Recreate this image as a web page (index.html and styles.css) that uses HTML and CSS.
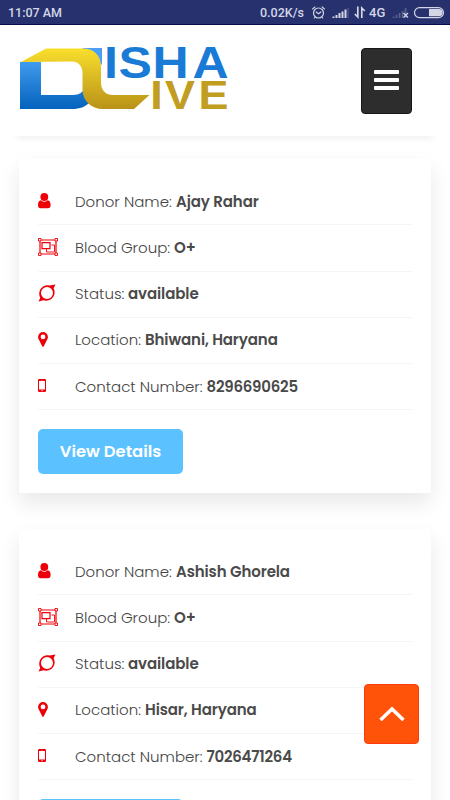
FILE: index.html
```html
<!DOCTYPE html>
<html lang="en">
<head>
<meta charset="utf-8">
<title>Disha Live</title>
<link rel="stylesheet" href="styles.css">
</head>
<body>
<svg class="sprite" aria-hidden="true">
  <symbol id="user" viewBox="0 0 13 16"><circle cx="6.3" cy="4" r="3.9"/><path d="M3 7.2C.8 7.4 0 9.5 0 12c0 2.200 1 3.200 2.700 3.200h7.200c1.700 0 2.700-1 2.700-3.200 0-2.500-.8-4.600-3-4.800a4.800 4.800 0 0 1-6.600 0z"/></symbol>
  <symbol id="group" viewBox="0 0 20 18"><g fill="none" stroke="currentColor"><path d="M2 2h16v14H2z" stroke-width="1.200"/><path d="M8.500 11v3h8V7h-3" stroke-width=".9"/><path d="M4 4.700h8v6H4z" stroke-width="1.200"/><path fill="#fff" d="M.5.5H3V3H.5zM17 .5h2.500V3H17zM.5 15H3v2.500H.5zM17 15h2.500v2.500H17z" stroke-width=".9"/></g></symbol>
  <symbol id="status" viewBox="0 0 18 18"><path fill-rule="evenodd" d="M17.500.5 15.600 4.300C18 9 16 13.500 12.500 15.600c-2.500 1.400-5 1.300-7 .6L.5 17.500l1.700-3.600C0 9 2 4.500 5.500 2.300c2-1.200 4-1.300 6-.8zM9 3a6 6 0 1 0 0 12A6 6 0 0 0 9 3z"/></symbol>
  <symbol id="pin" viewBox="0 0 10 15"><path fill-rule="evenodd" d="M5 0a4.900 4.900 0 0 0-4.900 4.900c0 1.200.3 1.900.7 2.700l3.400 6.700q.8 1 1.600 0l3.400-6.700c.4-.8.7-1.500.7-2.700A4.900 4.900 0 0 0 5 0zm0 2.500a2.400 2.400 0 1 1 0 4.800 2.400 2.400 0 0 1 0-4.800z"/></symbol>
  <symbol id="phone" viewBox="0 0 8 13"><path fill-rule="evenodd" d="M1.200 0h5.600Q8 0 8 1.200v10.600Q8 13 6.800 13H1.200Q0 13 0 11.800V1.200Q0 0 1.200 0zM1 2v8.600h6V2zm2-1.100v.4h2v-.4zm.4 10.400v.9h1.200v-.9z"/></symbol>
</svg>

<div class="statusbar">
  <span class="clock">11:07 AM</span>
  <span class="speed">0.02K/s</span>
  <svg class="system" width="146" height="24" viewBox="0 0 146 24" fill="none" stroke="#d4d6e5">
    <circle cx="14.500" cy="13" r="5" stroke-width="1.200"/><path d="m11.800 11.700 2.700 2 2.700-2M8.300 9.200l3-2.600M20.700 9.200l-3-2.600M11 17.300l-1 1M18 17.300l1 1" stroke-width="1.200"/>
    <path d="M29.500 18v-1.500M32.500 18v-3M35.500 18v-5M38.500 18v-6.500M41.500 18V9.500" stroke-width="2"/><path d="M44 18V8" stroke="#4b548c" stroke-width="1.500"/>
    <path d="M53.800 6.500V17l-3-3M57.800 18V8l3 3" stroke-width="1.700"/>
    <path d="M89.500 18v-1.500M92.500 18v-3M95.500 18v-5M98.500 18v-7M101.500 18V8" stroke="#59618f" stroke-width="1.700"/><path d="m99.500 13 4.500 4.500m0-4.500-4.500 4.500" stroke-width="1.300"/>
    <rect x="110.500" y="7.600" width="29" height="10" rx="5" stroke-width="1.200"/><path d="M125 9h10a3.600 3.600 0 0 1 0 7.200h-10z" fill="#d4d6e5" stroke="none"/>
    <text x="65" y="17.300" class="network">4G</text>
  </svg>
</div>

<header class="header">
  <svg class="logo" width="212" height="66" viewBox="18 45 212 66" role="img" aria-label="Disha Live">
    <defs>
      <linearGradient id="blue" x1="0" y1="0" x2="0" y2="1"><stop stop-color="#419bed"/><stop offset="1" stop-color="#0362bd"/></linearGradient>
      <linearGradient id="gold" x1="0" y1="0" x2="0" y2="1"><stop stop-color="#f9df2c"/><stop offset="1" stop-color="#b99218"/></linearGradient>
    </defs>
    <path fill="#4ba0f5" d="M82 48h20v17z"/>
    <path fill="url(#blue)" d="M20 62h21v33h31c5 0 8-1 11-4l7 11c-5 5-10 7-18 7H20z"/>
    <path fill="url(#gold)" d="M21 62 46 48.500h37c11 0 18 7 18 18v16c0 8 5 12.500 12 12.500h36.500L134 109h-31c-12 0-20.500-8-20.500-20V73c0-7-4-11.500-11-11.500z"/>
    <text class="word disha" transform="scale(1.15 1)" y="78" x="90.500 103 132.700 167.400">ISHA</text>
    <text class="word live" transform="scale(1.11 1)" y="109" x="135.400 148.600 178.800">IVE</text>
  </svg>
  <button class="menu" aria-label="Menu"><span></span><span></span><span></span></button>
</header>

<main class="donors">
  <article class="card">
    <ul class="details">
      <li><svg class="icon user"><use href="#user"/></svg><span class="label name">Donor Name:</span><b>Ajay Rahar</b></li>
      <li><svg class="icon group"><use href="#group"/></svg><span class="label blood">Blood Group:</span><b>O+</b></li>
      <li><svg class="icon status"><use href="#status"/></svg><span class="label state">Status:</span><b>available</b></li>
      <li><svg class="icon pin"><use href="#pin"/></svg><span class="label place">Location:</span><b>Bhiwani, Haryana</b></li>
      <li><svg class="icon phone"><use href="#phone"/></svg><span class="label contact">Contact Number:</span><b class="number">8296690625</b></li>
    </ul>
    <a class="button">View Details</a>
  </article>
  <article class="card">
    <ul class="details">
      <li><svg class="icon user"><use href="#user"/></svg><span class="label name">Donor Name:</span><b>Ashish Ghorela</b></li>
      <li><svg class="icon group"><use href="#group"/></svg><span class="label blood">Blood Group:</span><b>O+</b></li>
      <li><svg class="icon status"><use href="#status"/></svg><span class="label state">Status:</span><b>available</b></li>
      <li><svg class="icon pin"><use href="#pin"/></svg><span class="label place">Location:</span><b>Hisar, Haryana</b></li>
      <li><svg class="icon phone"><use href="#phone"/></svg><span class="label contact">Contact Number:</span><b class="number">7026471264</b></li>
    </ul>
    <div class="button"></div>
  </article>
</main>

<a class="to-top" aria-label="Back to top"><svg width="28" height="18" viewBox="0 0 28 18"><path d="M2.500 15 14 4l11.500 11" fill="none" stroke="#fff" stroke-width="3.500"/></svg></a>
</body>
</html>
```
FILE: styles.css
```css
* { box-sizing: border-box; }
html, body { height: 800px; overflow: hidden; }
body { margin: 0; background: #fff; color: #444; font-family: Poppins, Inter, sans-serif; }
.sprite { position: absolute; width: 0; height: 0; }

.statusbar { display: flex; align-items: center; height: 25px; padding-left: 8px; background: #26316d; border-bottom: 1px solid #0a0b4b; color: #d4d6e5; font: 500 12.500px/25px Roboto, sans-serif; }
.speed { margin-left: auto; }
.system { flex: none; }
.network { font: 500 13px Roboto, sans-serif; fill: #d4d6e5; stroke: none; }

.header { display: flex; justify-content: space-between; align-items: flex-start; height: 111px; margin: 0 12px; padding: 20px 26px 0 6px; background: #fff; box-shadow: 0 7px 7px -5px rgba(0, 0, 0, .07); }
.word { font-family: "Liberation Sans", sans-serif; font-weight: 700; }
.disha { font-size: 43.500px; fill: #197bd5; }
.live { font-size: 40.500px; fill: #c19d21; }
.menu { display: flex; flex-direction: column; align-items: center; justify-content: center; gap: 3.400px; width: 51px; height: 66px; margin-top: 3px; padding: 0 0 2px; border: 1px solid #171717; border-radius: 4px; background: #2d2d2d; }
.menu span { width: 25px; height: 4.600px; border-radius: 1px; background: #fff; }

.donors { display: grid; gap: 36px; padding: 23px 19px 0; }
.card { height: 334px; padding: 20px 19px 0; background: #fff; box-shadow: 0 10px 20px rgba(0, 0, 0, .09); }
.details { margin: 0 0 19px; padding: 0; list-style: none; }
.details li { display: grid; grid-template-columns: 37px auto 1fr; align-items: center; height: 46.250px; border-bottom: 1px solid #f5f5f5; font-size: 15px; line-height: 22px; white-space: nowrap; }
.icon { display: block; margin-bottom: 2px; color: #ed0008; fill: currentColor; }
.user { width: 13px; height: 16px; }
.group { width: 20px; height: 18px; }
.status { width: 18px; height: 18px; }
.pin { width: 10px; height: 15px; }
.phone { width: 8px; height: 13px; }
.label { font-size: 15px; font-weight: 300; color: #444; }
.name { width: 101px; }
.blood { width: 99px; }
.state { width: 53px; }
.place { width: 70px; }
.contact { width: 131.500px; }
b { font-weight: 600; letter-spacing: -.1px; color: #4a4a4a; }
.number { letter-spacing: -.25px; }
.button { display: flex; align-items: center; justify-content: center; width: 145px; height: 45px; border-radius: 5px; background: #5bc2ff; color: #fff; font-size: 16.400px; font-weight: 600; }

.to-top { position: fixed; left: 364px; top: 684px; display: flex; align-items: center; justify-content: center; width: 55px; height: 60px; border: 1px solid #ff3a10; border-radius: 4px; background: #ff530a; }
```
